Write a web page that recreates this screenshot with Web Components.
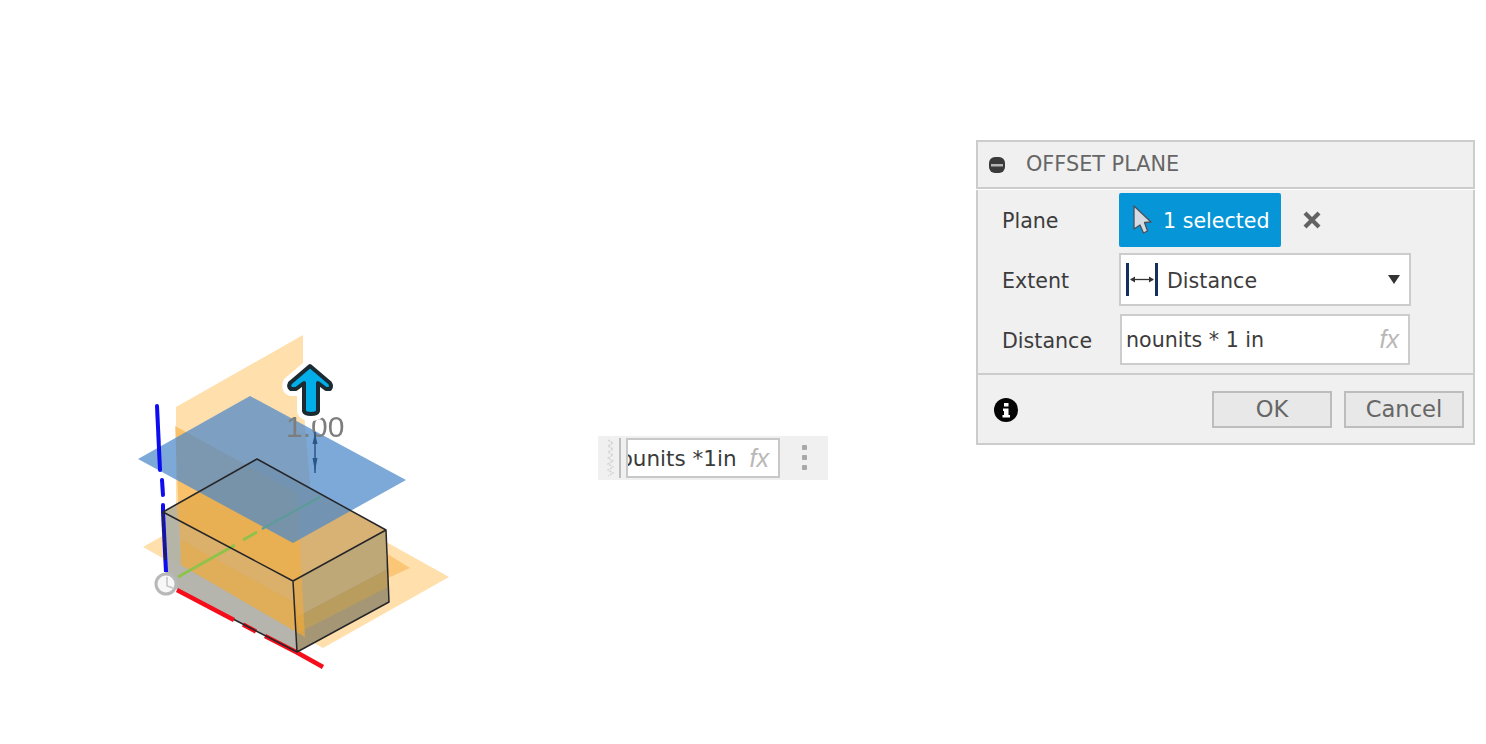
<!DOCTYPE html>
<html>
<head>
<meta charset="utf-8">
<style>
    html, body { margin: 0; background: #fff; }
    body { font-family: "DejaVu Sans", "Liberation Sans", sans-serif; }
</style>
</head>
<body>
<cad-viewport>
    <cad-scene></cad-scene>
    <expr-toolbar value="ounits *1in"></expr-toolbar>
    <offset-dialog title="OFFSET PLANE">
        <dialog-row label="Plane"><select-chip text="1 selected"></select-chip></dialog-row>
        <dialog-row label="Extent" style="margin-top:6px"><extent-select text="Distance"></extent-select></dialog-row>
        <dialog-row label="Distance" style="margin-top:8px"><expr-input text="nounits * 1 in"></expr-input></dialog-row>
        <dialog-button slot="actions" text="OK"></dialog-button>
        <dialog-button slot="actions" text="Cancel"></dialog-button>
    </offset-dialog>
</cad-viewport>

<script>
    function makeShadow(el, html) {
        const Shadow = el.attachShadow({mode: "open"});
        Shadow.innerHTML = html;
        return Shadow;
    }

    class CadViewport extends HTMLElement {
        constructor() {
            super();
            makeShadow(this, `
                <style>
                    :host {
                        display: flex;
                        align-items: flex-start;
                        width: 1486px;
                        height: 744px;
                        overflow: hidden;
                    }
                </style>
                <slot></slot>
            `);
        }
    }

    class CadScene extends HTMLElement {
        constructor() {
            super();
            makeShadow(this, `
                <style>
                    :host {
                        display: block;
                        flex: 0 0 598px;
                        height: 744px;
                    }
                    svg { display: block; }
                    text { font-family: "Liberation Sans", sans-serif; font-size: 30px; fill: #7d7d7d; }
                </style>
                <svg width="598" height="744" viewBox="0 0 598 744">
                    <defs>
                        <filter id="soft" x="-5%" y="-5%" width="110%" height="110%">
                            <feGaussianBlur stdDeviation="0.6"/>
                        </filter>
                    </defs>
                    <g filter="url(#soft)">
                        <!-- ground plane -->
                        <polygon points="143,547 268,476 449,577 323,648" fill="#ffdfab"/>
                        <!-- back plane -->
                        <polygon points="176,407 303,335 303,400 310,483 310,500 176,580" fill="#ffdfab"/>

                        <!-- box faces -->
                        <polygon points="163,512 293,581 297,652 166,584" fill="#b5b5ad"/>
                        <polygon points="293,581 386,530 389,602 297,652" fill="#a59775"/>
                        <polygon points="293,581 386,530 386,570 297,617" fill="#bfa878"/>
                        <polygon points="297,617 386,570 388,587 300,632" fill="#b89d5e"/>
                        <polygon points="163,512 257,459 386,530 293,581" fill="#d8b274"/>

                        <!-- front plane through the box -->
                        <polygon points="175,426 297,493 305,637 181,565" fill="#f5ad3c" fill-opacity=".58"/>
                        <polygon points="181,540 297,604 305,637 181,565" fill="#f0a530" fill-opacity=".3"/>
                        <polygon points="386,553 410,568 388,578" fill="#fbc777"/>
                        <polygon points="163,512 176,505 181,565 165,556" fill="#b5b5a5" fill-opacity=".8"/>

                        <!-- selected plane -->
                        <polygon points="138,459 250,396 406,480 293,543" fill="#4b88cb" fill-opacity=".72"/>

                        <!-- axes -->
                        <path d="M157 406 L160 470 M162 480 L163 495 M163 505 L163 512" stroke="#0a0af0" stroke-width="4" fill="none" stroke-linecap="round"/>
                        <path d="M163 512 L166 572" stroke="#0a0af0" stroke-width="4" fill="none"/>
                        <path d="M178 577 L235 545 M243 540 L257 532" stroke="#8fc24a" stroke-width="3" fill="none"/>
                        <path d="M262 529 L320 497" stroke="#5d9b98" stroke-width="2" fill="none"/>
                        <path d="M177 590 L234 620 M243 624.5 L256 631.5 M265 636 L297 652.6 L323 667" stroke="#f5101a" stroke-width="4.5" fill="none"/>

                        <!-- box edges -->
                        <path d="M163 512 L257 459 L386 530 L293 581 Z M293 581 L297 652 L389 602 L386 530 M163 512 L165 560 M234 619.5 L297 652"
                              stroke="#26262a" stroke-width="1.5" fill="none" stroke-linejoin="round"/>

                        <!-- origin -->
                        <circle cx="166" cy="584" r="10" fill="#f7f7f7" stroke="#b8b8b8" stroke-width="3"/>
                        <path d="M167 577 V586 L173 588" stroke="#c4c4c4" stroke-width="1.5" fill="none"/>

                        <!-- dimension -->
                        <text x="286" y="437">1.00</text>
                        <path d="M315 432 V473" stroke="#2a5686" stroke-width="1.5"/>
                        <path d="M315 433 L312.5 444 H317.5 Z M315 471 L312.5 458 H317.5 Z" fill="#2a5686"/>

                        <!-- manipulator arrow -->
                        <path d="M310 366 L290 383 Q288 387 291 389 L296 389 L304 383 V411 Q305 414 311 414 Q317 414 318 411 V383 L326 389 L330 389 Q332 386 330 383 Z"
                              fill="#fff" stroke="#fff" stroke-width="14" stroke-linejoin="round"/>
                        <path d="M310 366 L290 383 Q288 387 291 389 L296 389 L304 383 V411 Q305 414 311 414 Q317 414 318 411 V383 L326 389 L330 389 Q332 386 330 383 Z"
                              fill="#04aeea" stroke="#1d2a33" stroke-width="4" stroke-linejoin="round"/>
                    </g>
                </svg>
            `);
        }
    }

    class ExprToolbar extends HTMLElement {
        constructor() {
            super();
            makeShadow(this, `
                <style>
                    :host {
                        display: flex;
                        align-items: center;
                        box-sizing: border-box;
                        flex: 0 0 230px;
                        height: 44px;
                        margin-top: 436px;
                        padding-left: 8px;
                        background: #f0f0f0;
                    }
                    .grip { display: block; width: 10px; height: 40px; }
                    .bar { width: 2px; height: 40px; margin: 0 5px 0 3px; background: #bdbdbd; }
                    .field {
                        display: flex;
                        align-items: center;
                        box-sizing: border-box;
                        width: 154px;
                        height: 40px;
                        padding-right: 9px;
                        background: #fff;
                        border: 2px solid #c8c8c8;
                        overflow: hidden;
                    }
                    .value {
                        flex: 1;
                        font-size: 21.5px;
                        color: #3a3a3a;
                        white-space: nowrap;
                        direction: rtl;
                        overflow: hidden;
                        text-align: left;
                    }
                    .value span { direction: ltr; unicode-bidi: bidi-override; }
                    .fx { margin-left: 13px; font: italic 25px "Liberation Sans", sans-serif; color: #b8b8b8; }
                    .more { display: grid; gap: 5px; margin: -2px 0 0 22px; }
                    .more i { display: block; width: 5px; height: 5px; border-radius: 1px; background: #a8a8a8; }
                </style>
                <svg class="grip" viewBox="0 0 10 40">
                    <path d="M2 2 L7 5 L2 8 L7 11 L2 14 L7 17 L2 20 L7 23 L2 26 L7 29 L2 32 L7 35 L2 38"
                          fill="none" stroke="#d2d2d2" stroke-width="1.4" stroke-dasharray="2 1"/>
                </svg>
                <div class="bar"></div>
                <div class="field"><div class="value"><span></span></div><div class="fx">fx</div></div>
                <div class="more"><i></i><i></i><i></i></div>
            `);
            this.shadowRoot.querySelector(".value span").textContent = this.getAttribute("value");
        }
    }

    class OffsetDialog extends HTMLElement {
        constructor() {
            super();
            makeShadow(this, `
                <style>
                    :host {
                        display: block;
                        box-sizing: border-box;
                        flex: 0 0 499px;
                        margin: 140px 0 0 148px;
                        color: #3c3c3c;
                    }
                    .head, .body, .foot { box-sizing: border-box; background: #f0f0f0; border: 2px solid #cccccc; }
                    .head {
                        display: flex;
                        align-items: center;
                        height: 49px;
                        padding-left: 11px;
                        color: #666;
                        font-size: 20.8px;
                    }
                    .head svg { margin-right: 21px; }
                    .title { margin-top: -2px; }
                    .body {
                        height: 183px;
                        margin-top: 1px;
                        padding: 3px 0 0 24px;
                        border-top: 0;
                        border-bottom: 0;
                    }
                    .foot {
                        display: flex;
                        align-items: center;
                        height: 72px;
                        padding: 0 9px 0 16px;
                    }
                    .foot svg { margin: 2px auto 0 0; }
                    ::slotted(dialog-button) { margin-left: 12px; }
                </style>
                <div class="head">
                    <svg width="16" height="16" viewBox="0 0 16 16">
                        <rect width="16" height="16" rx="6" fill="#3a3a3a"/>
                        <rect x="2" y="7" width="12" height="2.5" fill="#b5b5b5"/>
                    </svg>
                    <span class="title"></span>
                </div>
                <div class="body"><slot></slot></div>
                <div class="foot">
                    <svg width="24" height="24" viewBox="0 0 24 24">
                        <circle cx="12" cy="12" r="12" fill="#050505"/>
                        <rect x="10" y="5" width="4.5" height="3.5" fill="#fff"/>
                        <path d="M9 10.5 H14.5 V17 H16 V19.5 H8.5 V17 H10 V13 H9 Z" fill="#fff"/>
                    </svg>
                    <slot name="actions"></slot>
                </div>
            `);
            this.shadowRoot.querySelector(".title").textContent = this.getAttribute("title");
            this.removeAttribute("title");
        }
    }

    class DialogRow extends HTMLElement {
        constructor() {
            super();
            makeShadow(this, `
                <style>
                    :host { display: flex; align-items: center; font-size: 20.6px; }
                    .label { flex: 0 0 117px; padding-top: 2px; color: #3c3c3c; }
                </style>
                <div class="label"></div>
                <slot></slot>
            `);
            this.shadowRoot.querySelector(".label").textContent = this.getAttribute("label");
        }
    }

    class SelectChip extends HTMLElement {
        constructor() {
            super();
            makeShadow(this, `
                <style>
                    :host { display: flex; align-items: center; }
                    .chip {
                        display: flex;
                        align-items: center;
                        box-sizing: border-box;
                        width: 162px;
                        height: 54px;
                        padding-left: 14px;
                        background: #0696d7;
                        border-radius: 2px;
                        color: #fff;
                        font-size: 20.6px;
                    }
                    .chip svg { margin-right: 11px; }
                    .text { padding-top: 2px; }
                    .clear { margin-left: 22px; display: block; }
                </style>
                <div class="chip">
                    <svg width="19" height="30" viewBox="0 0 19 30">
                        <path d="M1 1 L18 17 L11.5 17.5 L14.5 26 L10.5 28 L7 20 L1 24 Z" fill="#d4dbe2" stroke="#48525c" stroke-width="1.3" stroke-linejoin="round"/>
                    </svg>
                    <span class="text"></span>
                </div>
                <svg class="clear" width="18" height="18" viewBox="0 0 18 18">
                    <path d="M2 2 L16 16 M16 2 L2 16" stroke="#626262" stroke-width="4.2"/>
                </svg>
            `);
            this.shadowRoot.querySelector(".text").textContent = this.getAttribute("text");
        }
    }

    class ExtentSelect extends HTMLElement {
        constructor() {
            super();
            makeShadow(this, `
                <style>
                    :host {
                        display: flex;
                        align-items: center;
                        box-sizing: border-box;
                        width: 292px;
                        height: 53px;
                        padding: 0 9px 0 5px;
                        background: #fff;
                        border: 2px solid #cccccc;
                        font-size: 20.6px;
                    }
                    .text { flex: 1; margin-left: 8px; padding-top: 2px; }
                </style>
                <svg width="33" height="33" viewBox="0 0 33 33">
                    <path d="M1.5 0 V33 M30.5 0 V33" stroke="#15305f" stroke-width="3"/>
                    <path d="M5 16.5 H27" stroke="#333" stroke-width="1.3"/>
                    <path d="M4 16.5 L9 13.5 V19.5 Z M28 16.5 L23 13.5 V19.5 Z" fill="#333"/>
                </svg>
                <span class="text"></span>
                <svg width="12" height="9" viewBox="0 0 12 9"><path d="M0 0 H12 L6 9 Z" fill="#333"/></svg>
            `);
            this.shadowRoot.querySelector(".text").textContent = this.getAttribute("text");
        }
    }

    class ExprInput extends HTMLElement {
        constructor() {
            super();
            makeShadow(this, `
                <style>
                    :host {
                        display: flex;
                        align-items: center;
                        box-sizing: border-box;
                        width: 290px;
                        height: 51px;
                        margin-left: 1px;
                        padding: 0 9px 0 4px;
                        background: #fff;
                        border: 2px solid #cccccc;
                        font-size: 20.6px;
                    }
                    .text { flex: 1; }
                    .fx { font: italic 25px "Liberation Sans", sans-serif; color: #b8b8b8; }
                </style>
                <span class="text"></span>
                <span class="fx">fx</span>
            `);
            this.shadowRoot.querySelector(".text").textContent = this.getAttribute("text");
        }
    }

    class DialogButton extends HTMLElement {
        constructor() {
            super();
            makeShadow(this, `
                <style>
                    :host {
                        display: flex;
                        align-items: center;
                        justify-content: center;
                        box-sizing: border-box;
                        width: 120px;
                        height: 37px;
                        background: #e8e8e8;
                        border: 2px solid #bdbdbd;
                        color: #666;
                        font-size: 22.6px;
                    }
                </style>
                <span class="text"></span>
            `);
            this.shadowRoot.querySelector(".text").textContent = this.getAttribute("text");
        }
    }

    customElements.define("cad-viewport", CadViewport);
    customElements.define("cad-scene", CadScene);
    customElements.define("expr-toolbar", ExprToolbar);
    customElements.define("offset-dialog", OffsetDialog);
    customElements.define("dialog-row", DialogRow);
    customElements.define("select-chip", SelectChip);
    customElements.define("extent-select", ExtentSelect);
    customElements.define("expr-input", ExprInput);
    customElements.define("dialog-button", DialogButton);
</script>
</body>
</html>
